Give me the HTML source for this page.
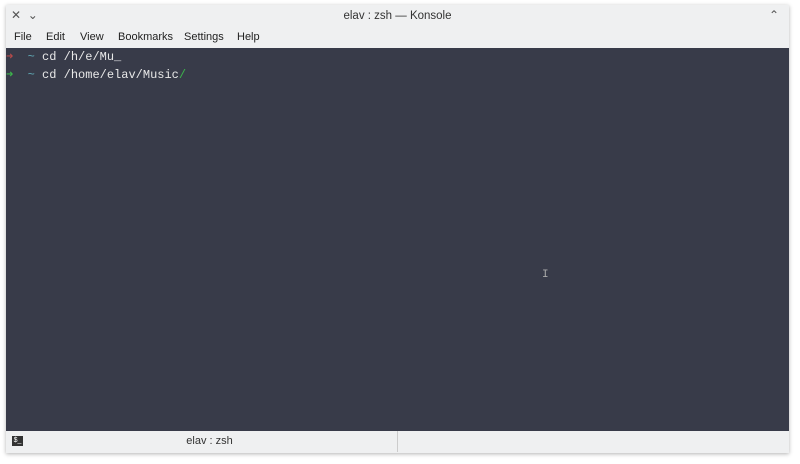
<html><head><style>
body{margin:0;width:800px;height:464px;background:#fff;position:relative;overflow:hidden;font-family:"Liberation Sans",sans-serif}
.win{position:absolute;left:6px;top:5px;width:783px;height:448px;background:#eff0f1;box-shadow:0 1px 4px rgba(0,0,0,.3)}
.title{position:absolute;top:5px;left:0;right:0;text-align:center;font-size:11.5px;color:#333}
.menu{position:absolute;top:26px;left:0;font-size:11px;color:#222}
.menu span{position:absolute;white-space:nowrap}
.term{position:absolute;left:0;top:43px;width:783px;height:383px;background:#383b49;font-family:"Liberation Mono",monospace;font-size:12px;color:#e8e8e8}
.l{position:absolute;left:0;white-space:pre}
.tabs{position:absolute;left:0;top:426px;width:783px;height:22px}
.tab{position:absolute;left:0;top:0;width:391px;height:21px;border-right:1px solid #ccc;font-size:11px;color:#333;text-align:center;line-height:21px}
</style></head><body>
<div class="win">
<div style="position:absolute;left:5px;top:3px;font-size:12px;color:#555">✕ &nbsp;⌄</div>
<div class="title">elav : zsh — Konsole</div>
<div style="position:absolute;right:10px;top:3px;font-size:12px;color:#555">⌃</div>
<div class="menu"><span style="left:8px">File</span><span style="left:40px">Edit</span><span style="left:74px">View</span><span style="left:112px">Bookmarks</span><span style="left:178px">Settings</span><span style="left:231px">Help</span></div>
<div class="term">
<div class="l" style="top:1px"><span style="color:#b44a4a">➜</span>  <span style="color:#5fa7b3">~</span> cd /h/e/Mu_</div>
<div class="l" style="top:19px"><span style="color:#3cb44b">➜</span>  <span style="color:#5fa7b3">~</span> cd /home/elav/Music<span style="color:#3cb44b">/</span></div>
<div style="position:absolute;left:536px;top:221px;color:#aaa;font-size:11px">I</div>
</div>
<div class="tabs"><div class="tab"><span style="position:absolute;left:6px;top:5px;width:11px;height:10px;background:#333;color:#fff;font-size:7px;line-height:10px">$_</span><span style="position:relative;left:8px">elav : zsh</span></div></div>
</div>
</body></html>
